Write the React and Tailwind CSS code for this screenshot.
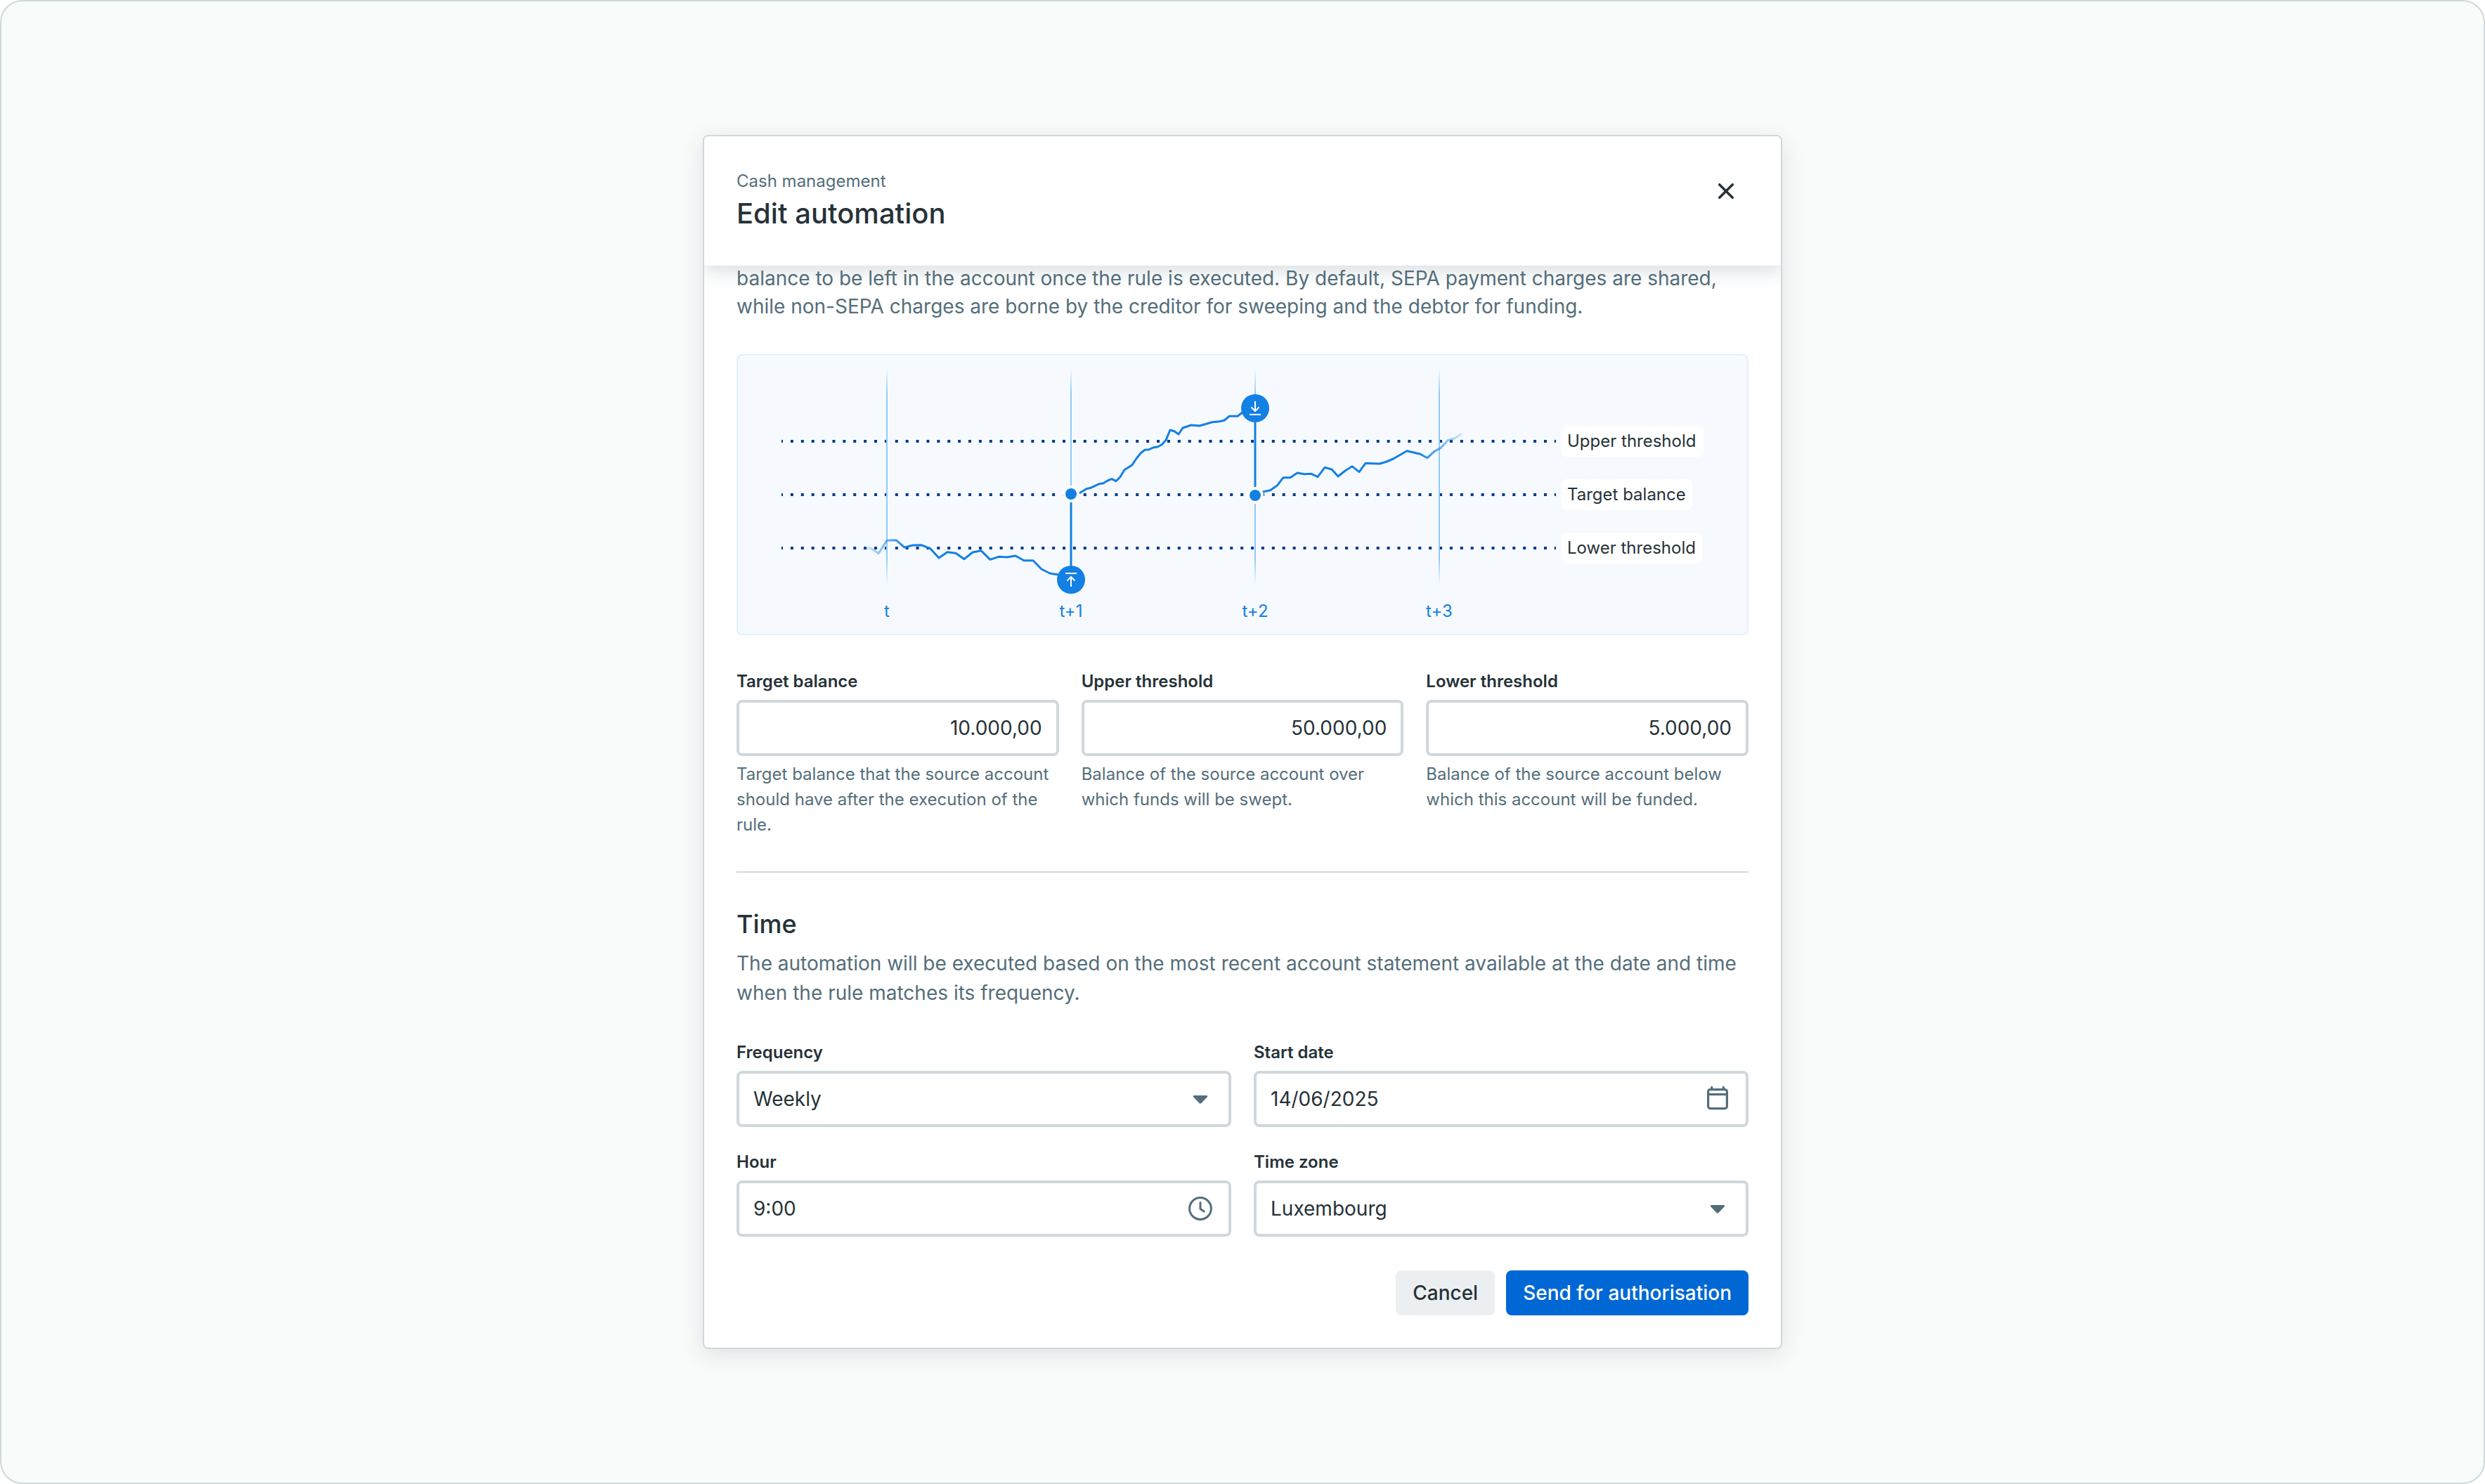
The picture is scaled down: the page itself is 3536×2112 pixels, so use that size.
const AXIS = [
  { x: 212, label: "t" },
  { x: 474, label: "t+1" },
  { x: 736, label: "t+2" },
  { x: 998, label: "t+3" },
];

const THRESHOLDS = [
  { y: 122, label: "Upper threshold", width: 202 },
  { y: 198, label: "Target balance", width: 186 },
  { y: 274, label: "Lower threshold", width: 200 },
];

function CloseIcon() {
  return (
    <svg viewBox="0 0 40 40" className="size-10" fill="none" stroke="currentColor" strokeWidth="3.5" strokeLinecap="round" aria-hidden="true">
      <path d="M10.7 10.7l18.600 18.600M29.300 10.700l-18.600 18.600" />
    </svg>
  );
}

function CaretIcon() {
  return (
    <svg viewBox="0 0 40 40" className="size-10" fill="currentColor" aria-hidden="true">
      <path d="M11 15h18c1.200 0 1.600 1.300.800 2.200l-8.400 8.800c-.800.900-2 .900-2.800 0l-8.400-8.800c-.800-.900-.400-2.200.800-2.200z" />
    </svg>
  );
}

function CalendarIcon() {
  return (
    <svg viewBox="0 0 40 40" className="size-10" fill="none" stroke="currentColor" strokeWidth="3.2" aria-hidden="true">
      <rect x="6.6" y="6.6" width="26.800" height="27" rx="3" />
      <path d="M6 13.5h28" />
      <path d="M11.700 3.400v3M28.300 3.400v3" strokeLinecap="round" />
    </svg>
  );
}

function ClockIcon() {
  return (
    <svg viewBox="0 0 40 40" className="size-10" fill="none" stroke="currentColor" strokeWidth="3" aria-hidden="true">
      <circle cx="20" cy="20" r="15.400" />
      <path d="M20 11.500v9l5.200 3.600" strokeLinecap="round" strokeLinejoin="round" />
    </svg>
  );
}

function Chart() {
  return (
    <figure className="overflow-hidden rounded-lg border-2 border-[#e1f1fe] bg-[#f6faff]">
      <svg viewBox="0 0 1436 396" className="block w-full" role="img" aria-label="Balance over time against the three thresholds" fontFamily="Inter, sans-serif" fontSize="24">
        <defs>
          <linearGradient id="tick" gradientUnits="userSpaceOnUse" x1="0" y1="18" x2="0" y2="326">
            <stop offset="0" stopColor="#90caf9" stopOpacity="0" />
            <stop offset="0.12" stopColor="#90caf9" />
            <stop offset="0.88" stopColor="#90caf9" />
            <stop offset="1" stopColor="#90caf9" stopOpacity="0" />
          </linearGradient>
          <linearGradient id="fadeIn" gradientUnits="userSpaceOnUse" x1="170" y1="0" x2="240" y2="0">
            <stop offset="0" stopColor="#1380e4" stopOpacity="0" />
            <stop offset="1" stopColor="#1380e4" />
          </linearGradient>
          <linearGradient id="fadeOut" gradientUnits="userSpaceOnUse" x1="970" y1="0" x2="1036" y2="0">
            <stop offset="0" stopColor="#1380e4" />
            <stop offset="1" stopColor="#1380e4" stopOpacity="0.08" />
          </linearGradient>
        </defs>

        <g stroke="#003a8c" strokeWidth="4" strokeDasharray="4 10.89" strokeDashoffset="2">
          {THRESHOLDS.map((t) => (
            <line key={t.label} x1="62" x2="1164" y1={t.y} y2={t.y} />
          ))}
        </g>
        {AXIS.map((a) => (
          <g key={a.label}>
            <rect x={a.x - 1} y="18" width="2" height="308" fill="url(#tick)" />
            <text x={a.x} y="372" textAnchor="middle" fill="#1380e4">{a.label}</text>
          </g>
        ))}

        <g fill="none" strokeWidth="3" strokeLinejoin="round">
          <polyline
            stroke="url(#fadeIn)"
            points="177,276 189,274 200,281.7 212,263.3 225,262.7 237,273 249,270 261,269.7 274,275 286,288 298,279.7 310,281.3 322,289.7 334,280 346,277.7 359,290.3 371,286.3 383,287 395,285 407,291.7 420,291.7 432,304 444,310 455,311.7 474,313"
          />
          <polyline
            stroke="#1380e4"
            points="474,203 486,195.7 496,189.7 502,188.3 514,182.7 520,181.7 526,178 532,175.7 538,178.7 544,172.7 550,162.7 561,155.7 567.5,146 573,139 579,134.3 585,133.7 591,131 597,130 603,127 609,120.3 615,106 621,107.7 627,112 633,103 645,99 657,100 675,94.7 686,93.7 692.5,92 699,86.3 711,86.3 717.5,81.3 730,75"
          />
          <polyline
            stroke="url(#fadeOut)"
            points="740,195 748,193.7 757.5,191.7 767,185.3 776,173.7 786,173.7 796,167 806,168.7 816,168.3 825,172.7 835,159.3 845,162 854,172 864,164 874,157.7 884,165.7 893,153.3 913,154 923,151 932.5,147 952,135.7 971,140.3 981,145.7 991,136.3 1000,131.7 1010,120.7 1020,117.7 1030,111"
          />
          <path stroke="#1380e4" d="M474 198v122M736 76v122" />
        </g>

        <g fill="#1380e4" stroke="#ffffff" strokeWidth="4">
          <circle cx="474" cy="197" r="10" />
          <circle cx="736" cy="199" r="10" />
        </g>
        <g fill="#1380e4">
          <circle cx="474" cy="319" r="20" />
          <circle cx="736" cy="75" r="20" />
        </g>
        <g fill="none" stroke="#ffffff" strokeWidth="2">
          <path d="M466 310h16M474 329v-14M468.500 320.500l5.500-5.500 5.500 5.500" />
          <path d="M728 84h16M736 65v14M730.500 73.500l5.500 5.500 5.500-5.500" />
        </g>

        {THRESHOLDS.map((t) => (
          <g key={t.label}>
            <rect x="1172" y={t.y - 22} width={t.width} height="44" rx="8" fill="#ffffff" />
            <text x="1180" y={t.y + 8} fill="#263238">{t.label}</text>
          </g>
        ))}
      </svg>
    </figure>
  );
}

const control =
  "block h-20 w-full appearance-none rounded-lg border-4 border-[#cfd8dc] bg-white px-5 text-[28px] text-[#263238] outline-none focus:border-[#0068d4]";

function Field({ id, label, icon, help, children }) {
  return (
    <div className="flex flex-col">
      <label htmlFor={id} className="mb-2 text-2xl leading-9 font-semibold">
        {label}
      </label>
      <div className="relative">
        {children}
        {icon && (
          <span className="pointer-events-none absolute inset-y-0 right-6 flex items-center text-[#546e7a]">
            {icon}
          </span>
        )}
      </div>
      {help && <p className="mt-2 text-2xl leading-9 text-[#546e7a]">{help}</p>}
    </div>
  );
}

export default function App() {
  return (
    <main className="flex min-h-screen items-center justify-center rounded-[32px] border-2 border-[#cfd8dc] bg-[#f9fbfa] font-[Inter,sans-serif] text-[#263238]">
      <section
        role="dialog"
        aria-labelledby="dialog-title"
        className="w-full max-w-[1536px] overflow-hidden rounded-lg border-2 border-[#cfd8dc] bg-white shadow-[0_8px_32px_rgba(38,50,56,0.12)]"
      >
        <header className="relative z-10 flex items-start justify-between bg-white p-[46px] shadow-[0_8px_24px_rgba(84,110,122,0.22)]">
          <div>
            <p className="text-2xl leading-9 text-[#546e7a]">Cash management</p>
            <h1 id="dialog-title" className="text-[40px] leading-[56px] font-medium">
              Edit automation
            </h1>
          </div>
          <button type="button" aria-label="Close" className="mt-3 mr-3">
            <CloseIcon />
          </button>
        </header>

        <div className="px-[46px] pb-[46px]">
          <p className="-mt-0.5 text-[28px] leading-10 text-[#546e7a]">
            balance to be left in the account once the rule is executed. By default, SEPA payment charges are shared,
            while non-SEPA charges are borne by the creditor for sweeping and the debtor for funding.
          </p>

          <div className="mt-12">
            <Chart />
          </div>

          <div className="mt-12 grid grid-cols-3 gap-8">
            <Field id="target" label="Target balance" help="Target balance that the source account should have after the execution of the rule.">
              <input id="target" className={`${control} text-right`} defaultValue="10.000,00" />
            </Field>
            <Field id="upper" label="Upper threshold" help="Balance of the source account over which funds will be swept.">
              <input id="upper" className={`${control} text-right`} defaultValue="50.000,00" />
            </Field>
            <Field id="lower" label="Lower threshold" help="Balance of the source account below which this account will be funded.">
              <input id="lower" className={`${control} text-right`} defaultValue="5.000,00" />
            </Field>
          </div>

          <hr className="mt-12 border-t-2 border-[#cfd8dc]" />

          <h2 className="mt-12 text-4xl leading-[50px] font-medium">Time</h2>
          <p className="mt-[10px] text-[28px] leading-[42px] text-[#546e7a]">
            The automation will be executed based on the most recent account statement available at the date and time
            when the rule matches its frequency.
          </p>

          <div className="mt-[46px] grid grid-cols-2 gap-8">
            <Field id="frequency" label="Frequency" icon={<CaretIcon />}>
              <select id="frequency" className={control} defaultValue="Weekly">
                <option>Weekly</option>
              </select>
            </Field>
            <Field id="start" label="Start date" icon={<CalendarIcon />}>
              <input id="start" className={control} defaultValue="14/06/2025" />
            </Field>
            <Field id="hour" label="Hour" icon={<ClockIcon />}>
              <input id="hour" className={control} defaultValue="9:00" />
            </Field>
            <Field id="zone" label="Time zone" icon={<CaretIcon />}>
              <select id="zone" className={control} defaultValue="Luxembourg">
                <option>Luxembourg</option>
              </select>
            </Field>
          </div>

          <footer className="mt-12 flex justify-end gap-4 text-[28px] font-medium">
            <button type="button" className="h-16 rounded-lg bg-[#eceff1] px-6">
              Cancel
            </button>
            <button type="button" className="h-16 rounded-lg bg-[#0068d4] px-6 text-white">
              Send for authorisation
            </button>
          </footer>
        </div>
      </section>
    </main>
  );
}
